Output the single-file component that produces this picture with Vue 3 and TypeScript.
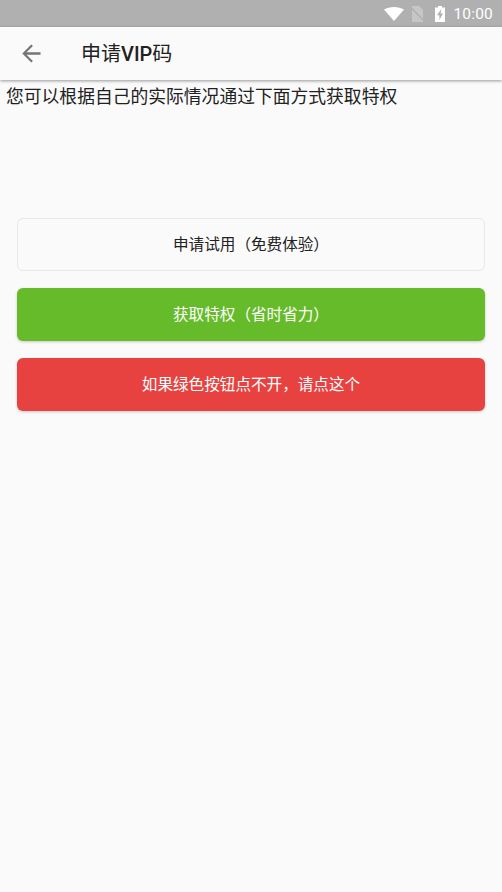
<script setup lang="ts">
const buttons = [
  { label: '申请试用（免费体验）', kind: 'plain' },
  { label: '获取特权（省时省力）', kind: 'green' },
  { label: '如果绿色按钮点不开，请点这个', kind: 'red' },
]
</script>

<template>
  <div class="page">
    <div class="status">
      <svg class="wifi" width="20" height="14" viewBox="0 0 20 14"><path d="M0 2.6C2.8.9 6.2 0 10 0s7.200.9 10 2.600L10 14z" fill="#fff"/></svg>
      <svg class="sim" width="13" height="16" viewBox="0 0 13 16"><path d="M1 0h7l4 4v12H1z" fill="#c6c6c6"/><path d="M0 1.500 13 15" stroke="#b0b0b0" stroke-width="1.500"/></svg>
      <svg class="battery" width="10" height="16" viewBox="0 0 10 16"><path fill-rule="evenodd" d="M3 0h4v1.500h3V16H0V1.500h3zM6.300 3 2 9.200h2.400V14L8 7.400H5.600z" fill="#fff"/></svg>
      <span class="time">10:00</span>
    </div>
    <header class="bar">
      <svg class="back" width="19" height="19" viewBox="0 0 20 20"><path d="M19.500 8.800H4.800l6.700-6.700L9.800.5.300 10l9.500 9.500 1.700-1.600-6.700-6.700h14.700z" fill="#757575"/></svg>
      <h1 class="title">申请<b>VIP</b>码</h1>
    </header>
    <p class="intro">您可以根据自己的实际情况通过下面方式获取特权</p>
    <div class="actions">
      <button v-for="b in buttons" :key="b.kind" class="btn" :class="b.kind" type="button"><span class="label">{{ b.label }}</span></button>
    </div>
  </div>
</template>

<style>
html, body { margin: 0; background: #fafafa; }
</style>

<style scoped>
.page {
  width: 502px;
  height: 892px;
  background: #fafafa;
  overflow: hidden;
  font-family: Roboto, "Noto Sans CJK SC", sans-serif;
}
.status {
  height: 27px;
  background: #b0b0b0;
  display: flex;
  align-items: center;
  justify-content: flex-end;
  padding-right: 9px;
  box-sizing: border-box;
}
.wifi { margin-right: 7px; }
.sim { margin-right: 11px; }
.battery { margin-right: 8px; }
.time { color: #fff; font-size: 15.500px; letter-spacing: 0.2px; }
.bar {
  height: 53px;
  background: #fafafa;
  display: flex;
  align-items: center;
  padding-left: 22px;
  box-shadow: 0 1px 3px rgba(0, 0, 0, 0.4);
  position: relative;
}
.back { flex: none; }
.title {
  margin: 0 0 0 40px;
  font-size: 20px;
  font-weight: 400;
  line-height: 28px;
  color: #212121;
}
.title b { font-weight: 500; }
.intro {
  margin: 5px 0 0 6px;
  font-size: 17.800px;
  line-height: 24px;
  color: #212121;
}
.actions {
  margin: 109px 17px 0;
  display: flex;
  flex-direction: column;
  gap: 17px;
}
.btn {
  height: 53px;
  border: 0;
  border-radius: 6px;
  font: inherit;
  font-size: 15.600px;
  padding: 0 0 3px;
  box-shadow: 0 1px 3px rgba(0, 0, 0, 0.2);
}
.plain {
  background: #fafafa;
  color: #212121;
  border: 1px solid #e8e8e8;
  box-shadow: none;
}
.green { background: #66bb2a; color: #fff; }
.red { background: #e84240; color: #fff; }
</style>
